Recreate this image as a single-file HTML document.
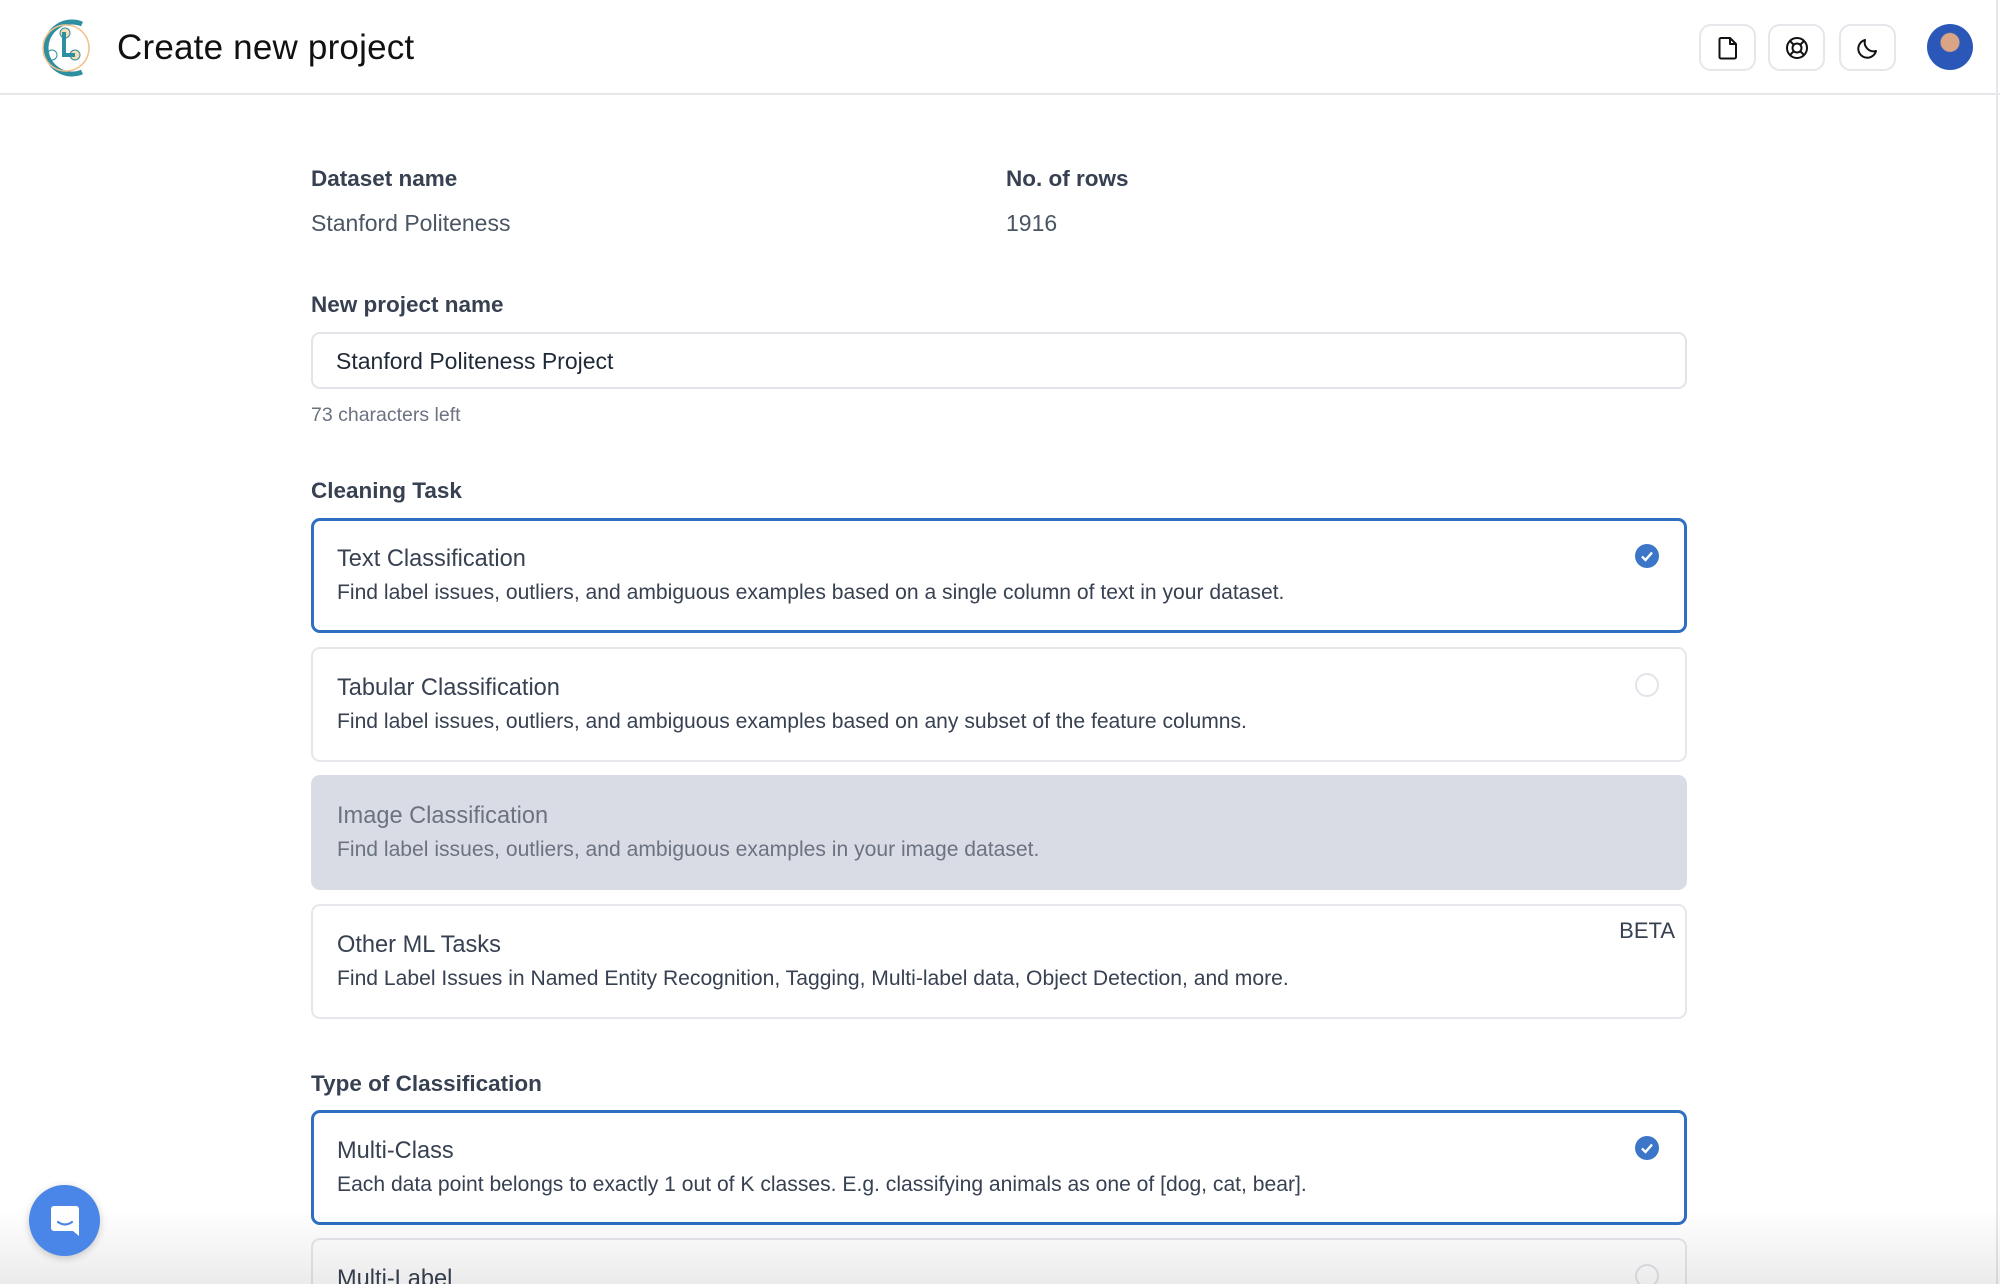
<!DOCTYPE html>
<html style="width:2000px;height:1284px;overflow:hidden"><head><meta charset="utf-8"><style>
*{box-sizing:border-box;margin:0;padding:0}
body{width:2000px;height:1284px;overflow:hidden;background:#fff;font-family:"Liberation Sans",Arial,sans-serif;position:relative;color:#374151}
.hdr{position:absolute;left:0;top:0;width:2000px;height:95px;border-bottom:2px solid #e5e7eb;background:#fff}
.title{position:absolute;left:117px;top:28px;font-size:35px;color:#111;letter-spacing:0.2px}
.btn{position:absolute;top:24px;width:57px;height:47px;border:2px solid #e5e7eb;border-radius:12px;display:flex;align-items:center;justify-content:center}
.av{position:absolute;left:1927px;top:24px;width:46px;height:46px;border-radius:50%;background:radial-gradient(circle at 50% 40%,#d9a585 0 9px,#2b58b8 10px);overflow:hidden}
.rline{position:absolute;left:1996px;top:0;width:2px;height:1284px;background:#e5e7eb}
.t{position:absolute;font-size:23px;white-space:nowrap}
.lbl{color:#374151;font-weight:bold;font-size:22.5px}
.val{color:#4b5563}
.inp{position:absolute;left:311px;top:332px;width:1376px;height:57px;border:2px solid #e2e4ea;border-radius:9px}
.card{position:absolute;left:311px;width:1376px;height:115px;border:2px solid #e6e7ec;border-radius:9px}
.card.sel{border:3px solid #2f6fc0}
.card.dis{background:#d9dce5;border-color:#d9dce5}
.card .h{position:absolute;left:24px;top:26px;font-size:23.6px;color:#374151}
.card .d{position:absolute;left:24px;top:61px;font-size:21.1px;color:#374151}
.card.sel .h{left:23px;top:25px}.card.sel .d{left:23px;top:60px}
.card.dis .h,.card.dis .d{color:#6b7280}
.chk{position:absolute;right:26px;top:24px;width:24px;height:24px;border-radius:50%;background:#3b76c8}
.card.sel .chk{right:25px;top:23px}
.rad{position:absolute;right:26px;top:24px;width:24px;height:24px;border-radius:50%;border:2px solid #e2e4ea}
.chat{position:absolute;left:29px;top:1185px;width:71px;height:71px;border-radius:50%;background:#4a86e8;box-shadow:0 2px 8px rgba(0,0,0,.2)}
.shade{position:absolute;left:0;top:1210px;width:2000px;height:74px;background:linear-gradient(rgba(255,255,255,0),rgba(0,0,0,.08))}
</style></head><body>
<div class="hdr">
<svg style="position:absolute;left:36px;top:18px" width="58" height="60" viewBox="0 0 58 60">
<path d="M46 6 A26 26 0 1 0 46 54" fill="none" stroke="#2e8fa0" stroke-width="5"/>
<circle cx="30" cy="30" r="23" fill="none" stroke="#f2c08a" stroke-width="1.5"/>
<circle cx="29" cy="15" r="5" fill="#f6ddb8" stroke="#2e8fa0" stroke-width="1"/>
<circle cx="39" cy="37" r="5" fill="#f6ddb8" stroke="#2e8fa0" stroke-width="1"/>
<circle cx="16" cy="37" r="5" fill="none" stroke="#2e8fa0" stroke-width="1"/>
<path d="M28 14 V37 H39" fill="none" stroke="#2e8fa0" stroke-width="4"/>
</svg>
<div class="title">Create new project</div>
<div class="btn" style="left:1699px"><svg width="22" height="24" viewBox="0 0 22 24"><path d="M4 2 H13 L19 8 V21 A1.5 1.5 0 0 1 17.5 22.5 H4 A1.5 1.5 0 0 1 2.5 21 V3.5 A1.5 1.5 0 0 1 4 2 Z M13 2 V8 H19" fill="none" stroke="#111" stroke-width="2" stroke-linejoin="round"/></svg></div>
<div class="btn" style="left:1768px"><svg width="24" height="24" viewBox="0 0 24 24"><circle cx="12" cy="12" r="10" fill="none" stroke="#111" stroke-width="2"/><circle cx="12" cy="12" r="4.5" fill="none" stroke="#111" stroke-width="2"/><path d="M5 5 L9 9 M19 5 L15 9 M5 19 L9 15 M19 19 L15 15" stroke="#111" stroke-width="2"/></svg></div>
<div class="btn" style="left:1839px"><svg width="24" height="24" viewBox="0 0 24 24"><path d="M20 15 A9 9 0 0 1 9 4 A9 9 0 1 0 20 15 Z" fill="none" stroke="#111" stroke-width="2" stroke-linejoin="round"/></svg></div>
<div class="av"></div>
</div>
<div class="rline"></div>

<div class="t lbl" style="left:311px;top:166px">Dataset name</div>
<div class="t lbl" style="left:1006px;top:166px">No. of rows</div>
<div class="t val" style="left:311px;top:210px">Stanford Politeness</div>
<div class="t val" style="left:1006px;top:210px">1916</div>
<div class="t lbl" style="left:311px;top:292px">New project name</div>
<div class="inp"></div>
<div class="t" style="left:336px;top:348px;color:#1f2937">Stanford Politeness Project</div>
<div class="t" style="left:311px;top:404px;font-size:19.5px;color:#6b7280">73 characters left</div>
<div class="t lbl" style="left:311px;top:478px">Cleaning Task</div>

<div class="card sel" style="top:518px"><div class="h">Text Classification</div><div class="d">Find label issues, outliers, and ambiguous examples based on a single column of text in your dataset.</div><div class="chk"><svg width="24" height="24" viewBox="0 0 24 24"><path d="M7 12.5 L10.5 16 L17 8.5" fill="none" stroke="#fff" stroke-width="2.4"/></svg></div></div>
<div class="card" style="top:647px"><div class="h">Tabular Classification</div><div class="d">Find label issues, outliers, and ambiguous examples based on any subset of the feature columns.</div><div class="rad"></div></div>
<div class="card dis" style="top:775px"><div class="h">Image Classification</div><div class="d">Find label issues, outliers, and ambiguous examples in your image dataset.</div></div>
<div class="card" style="top:904px"><div class="h">Other ML Tasks</div><div class="d">Find Label Issues in Named Entity Recognition, Tagging, Multi-label data, Object Detection, and more.</div><div style="position:absolute;right:10px;top:12px;font-size:22px;color:#374151">BETA</div></div>

<div class="t lbl" style="left:311px;top:1071px">Type of Classification</div>
<div class="card sel" style="top:1110px"><div class="h">Multi-Class</div><div class="d">Each data point belongs to exactly 1 out of K classes. E.g. classifying animals as one of [dog, cat, bear].</div><div class="chk"><svg width="24" height="24" viewBox="0 0 24 24"><path d="M7 12.5 L10.5 16 L17 8.5" fill="none" stroke="#fff" stroke-width="2.4"/></svg></div></div>
<div class="card" style="top:1238px;height:46px;border-bottom:none;border-bottom-left-radius:0;border-bottom-right-radius:0"><div class="h">Multi-Label</div><div class="rad"></div></div>

<div class="shade"></div>
<div class="chat"><svg style="position:absolute;left:21px;top:20px" width="30" height="32" viewBox="0 0 30 32"><path d="M4 1 H26 A3 3 0 0 1 29 4 V31 L23 26 H4 A3 3 0 0 1 1 23 V4 A3 3 0 0 1 4 1 Z" fill="#fff"/><path d="M8 17 Q15 22 22 17" fill="none" stroke="#4a86e8" stroke-width="2.2" stroke-linecap="round"/></svg></div>
</body></html>
